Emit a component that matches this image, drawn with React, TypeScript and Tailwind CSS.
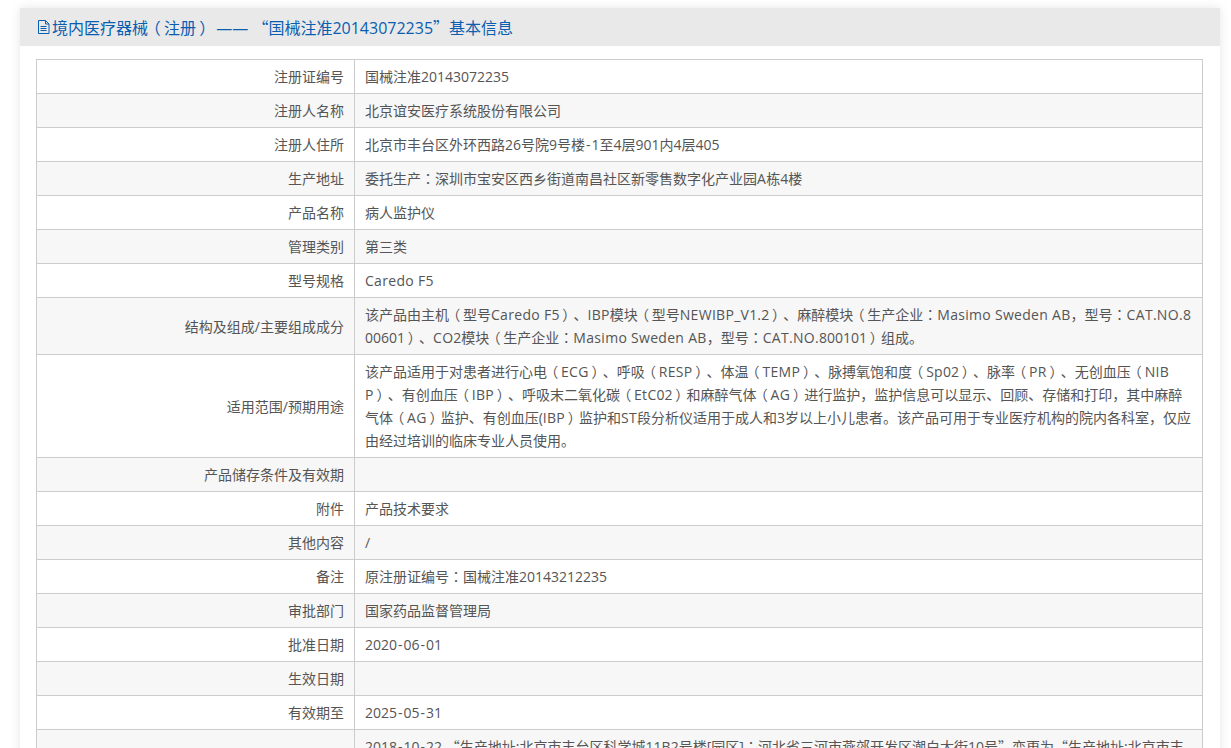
const rows: { label: string; value: string }[] = [
  { label: "注册证编号", value: "国械注准20143072235" },
  { label: "注册人名称", value: "北京谊安医疗系统股份有限公司" },
  { label: "注册人住所", value: "北京市丰台区外环西路26号院9号楼-1至4层901内4层405" },
  { label: "生产地址", value: "委托生产：深圳市宝安区西乡街道南昌社区新零售数字化产业园A栋4楼" },
  { label: "产品名称", value: "病人监护仪" },
  { label: "管理类别", value: "第三类" },
  { label: "型号规格", value: "Caredo F5" },
  {
    label: "结构及组成/主要组成成分",
    value:
      "该产品由主机（型号Caredo F5）、IBP模块（型号NEWIBP_V1.2）、麻醉模块（生产企业：Masimo Sweden AB，型号：CAT.NO.800601）、CO2模块（生产企业：Masimo Sweden AB，型号：CAT.NO.800101）组成。",
  },
  {
    label: "适用范围/预期用途",
    value:
      "该产品适用于对患者进行心电（ECG）、呼吸（RESP）、体温（TEMP）、脉搏氧饱和度（Sp02）、脉率（PR）、无创血压（NIBP）、有创血压（IBP）、呼吸末二氧化碳（EtC02）和麻醉气体（AG）进行监护，监护信息可以显示、回顾、存储和打印，其中麻醉气体（AG）监护、有创血压(IBP）监护和ST段分析仪适用于成人和3岁以上小儿患者。该产品可用于专业医疗机构的院内各科室，仅应由经过培训的临床专业人员使用。",
  },
  { label: "产品储存条件及有效期", value: "" },
  { label: "附件", value: "产品技术要求" },
  { label: "其他内容", value: "/" },
  { label: "备注", value: "原注册证编号：国械注准20143212235" },
  { label: "审批部门", value: "国家药品监督管理局" },
  { label: "批准日期", value: "2020-06-01" },
  { label: "生效日期", value: "" },
  { label: "有效期至", value: "2025-05-31" },
  {
    label: "变更情况",
    value:
      "2018-10-22 “生产地址:北京市丰台区科学城11B2号楼[园区]；河北省三河市燕郊开发区潮白大街10号”变更为“生产地址:北京市丰台区科学城11B2号楼[园区]；河北省三河市燕郊开发区潮白大街10号”。",
  },
];

const tokens = /([（）：；，、“”-]|[A-Za-z_.]+(?: [A-Za-z]+)*)/;

// The reference font centres brackets and colons, quotes are full width, letters run a bit wider
function tokenClass(part: string) {
  if (part === "（") return "-ml-[0.2em] mr-[0.2em] font-['Noto_Sans_CJK_TC',sans-serif]";
  if (part === "）") return "ml-[0.2em] -mr-[0.2em] font-['Noto_Sans_CJK_TC',sans-serif]";
  if (part === "：" || part === "；") return "font-['Noto_Sans_CJK_TC',sans-serif]";
  if (part === "，" || part === "、" || part === "“" || part === "”") return "font-['Noto_Sans_CJK_SC',sans-serif]";
  if (part === "-") return "px-px";
  return "tracking-[0.3px]";
}

function Rich({ text }: { text: string }) {
  return (
    <>
      {text.split(tokens).map((part, i) =>
        i % 2 === 1 ? (
          <span key={i} className={tokenClass(part)}>
            {part}
          </span>
        ) : (
          part
        )
      )}
    </>
  );
}

export default function App() {
  return (
    <div className="h-[748px] overflow-hidden bg-white font-['Open_Sans','Noto_Sans_CJK_SC',sans-serif] text-sm text-[#555] [text-spacing-trim:space-all]">
      <div className="mx-[20px] mt-2 w-[1200px] bg-white shadow-[0_0_10px_rgba(0,0,0,0.1)]">
        {/* Title bar */}
        <div className="flex h-[38px] items-center bg-[#e9e9e9] pl-[17px] text-base text-[#0a5eb0]">
          <svg className="h-[14px] w-[14px] shrink-0" viewBox="0 0 14 14" fill="none" stroke="currentColor" strokeWidth="1">
            <path d="M1.5 0.5h7l3.5 3.5v9.5h-10.5z" />
            <path d="M8.5 0.5v3.5h3.5" />
            <path d="M3.5 6.5h6M3.5 8.5h6M3.5 10.5h6" />
          </svg>
          <span className="ml-px whitespace-pre">
            <Rich text="境内医疗器械（注册） —— “国械注准20143072235”基本信息" />
          </span>
        </div>

        <div className="pr-[17px] pl-[16px] pt-[13px]">
          <table className="w-full table-fixed border-collapse">
            <colgroup>
              <col className="w-[318px]" />
              <col />
            </colgroup>
            <tbody>
              {rows.map((row, i) => (
                <tr key={row.label} className={i % 2 === 1 ? "bg-[#f7f7f7]" : "bg-white"}>
                  <td className="border border-[#ccc] px-[10px] py-[5px] text-right leading-[23px]">{row.label}</td>
                  <td className="border border-[#ccc] px-[10px] py-[5px] leading-[23px] break-all">
                    <Rich text={row.value} />
                  </td>
                </tr>
              ))}
            </tbody>
          </table>
        </div>
      </div>
    </div>
  );
}
